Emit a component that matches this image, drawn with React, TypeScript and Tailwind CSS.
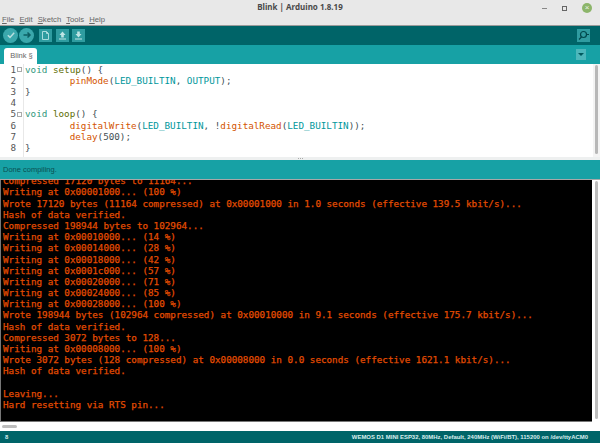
const mono = '[font-family:"DejaVu_Sans_Mono",monospace]'

const consoleLines = [
  'Compressed 17120 bytes to 11164...',
  'Writing at 0x00001000... (100 %)',
  'Wrote 17120 bytes (11164 compressed) at 0x00001000 in 1.0 seconds (effective 139.5 kbit/s)...',
  'Hash of data verified.',
  'Compressed 198944 bytes to 102964...',
  'Writing at 0x00010000... (14 %)',
  'Writing at 0x00014000... (28 %)',
  'Writing at 0x00018000... (42 %)',
  'Writing at 0x0001c000... (57 %)',
  'Writing at 0x00020000... (71 %)',
  'Writing at 0x00024000... (85 %)',
  'Writing at 0x00028000... (100 %)',
  'Wrote 198944 bytes (102964 compressed) at 0x00010000 in 9.1 seconds (effective 175.7 kbit/s)...',
  'Hash of data verified.',
  'Compressed 3072 bytes to 128...',
  'Writing at 0x00008000... (100 %)',
  'Wrote 3072 bytes (128 compressed) at 0x00008000 in 0.0 seconds (effective 1621.1 kbit/s)...',
  'Hash of data verified.',
  '',
  'Leaving...',
  'Hard resetting via RTS pin...',
]

function Kw({ children }: { children: string }) {
  return <span className="text-[#33997e]">{children}</span>
}
function Fn({ children }: { children: string }) {
  return <span className="text-[#5e6d03]">{children}</span>
}
function Call({ children }: { children: string }) {
  return <span className="text-[#d35400]">{children}</span>
}
function Led() {
  return <span className="text-[#00979c]">LED_BUILTIN</span>
}

const code = [
  <><Kw>void</Kw> <Fn>setup</Fn>() {'{'}</>,
  <>{'        '}<Call>pinMode</Call>(<Led />, <span className="text-[#00979c]">OUTPUT</span>);</>,
  <>{'}'}</>,
  <></>,
  <><Kw>void</Kw> <Fn>loop</Fn>() {'{'}</>,
  <>{'        '}<Call>digitalWrite</Call>(<Led />, !<Call>digitalRead</Call>(<Led />));</>,
  <>{'        '}<Call>delay</Call>(500);</>,
  <>{'}'}</>,
]

export default function App() {
  return (
    <div className="flex h-[443px] w-[600px] flex-col overflow-hidden bg-white [font-family:'Liberation_Sans',sans-serif]">
      {/* window title */}
      <div className="relative flex h-[15px] items-center justify-center bg-[#e8e8e8]">
        <span className="text-[8px] font-bold text-[#4a4a4a] [font-family:'Noto_Sans',sans-serif]">Blink | Arduino 1.8.19</span>
        <div className="absolute right-[8px] top-[3px] flex items-center gap-[15px]">
          <span className="h-px w-[5px] bg-[#888]" />
          <span className="h-[5px] w-[5px] border border-[#666]" />
          <span className="flex h-[10px] w-[10px] items-center justify-center rounded-full bg-[#8cb56a] text-[8px] leading-none text-[#eef3e8]">×</span>
        </div>
      </div>
      {/* menu */}
      <div className="flex h-[10px] items-center gap-[5px] bg-[#e8e8e8] pl-[2px] text-[7.7px] text-[#666]">
        <span><u>F</u>ile</span>
        <span><u>E</u>dit</span>
        <span><u>S</u>ketch</span>
        <span><u>T</u>ools</span>
        <span><u>H</u>elp</span>
      </div>
      <div className="h-px bg-[#9a9a9a]" />
      {/* toolbar */}
      <div className="flex h-[19px] items-center bg-[#006468] pl-[3px] pr-[10px]">
        <div className="flex h-[15px] w-[15px] items-center justify-center rounded-full bg-[#3aa8ac]">
          <svg viewBox="0 0 14 14" className="h-[14px] w-[14px]" fill="none" stroke="#b9dfdf" strokeWidth="1.5">
            <path d="M3.8 7.2 6 9.4 10.2 4.8" />
          </svg>
        </div>
        <div className="ml-[1px] flex h-[15px] w-[15px] items-center justify-center rounded-full bg-[#3aa8ac]">
          <svg viewBox="0 0 14 14" className="h-[14px] w-[14px]" fill="none" stroke="#0d5f63" strokeWidth="1.5">
            <path d="M3.5 7h6.5M7.5 4.5 10 7l-2.5 2.5" />
          </svg>
        </div>
        <div className="ml-[5px] flex h-[13px] w-[13px] items-center justify-center bg-[#2f9ca0]">
          <svg viewBox="0 0 13 13" className="h-[13px] w-[13px]" fill="none" stroke="#a9dcde" strokeWidth="1">
            <path d="M3.5 2.5h4l2 2v6h-6zM7.5 2.5v2h2" />
          </svg>
        </div>
        <div className="ml-[4px] flex h-[13px] w-[13px] items-center justify-center bg-[#2f9ca0]">
          <svg viewBox="0 0 13 13" className="h-[13px] w-[13px]" fill="#bfe4e5">
            <path d="M6.5 2.5 9.5 6H7.8v2.5H5.2V6H3.5zM3 9.5h7v1H3z" />
          </svg>
        </div>
        <div className="ml-[3px] flex h-[13px] w-[13px] items-center justify-center bg-[#2f9ca0]">
          <svg viewBox="0 0 13 13" className="h-[13px] w-[13px]" fill="#bfe4e5">
            <path d="M5.2 2.5h2.6V5h1.7l-3 3.5-3-3.5h1.7zM3 9.5h7v1H3z" />
          </svg>
        </div>
        <div className="ml-auto flex h-[13px] w-[13px] items-center justify-center bg-[#2f9ca0]">
          <svg viewBox="0 0 13 13" className="h-[13px] w-[13px]" fill="none" stroke="#00484c" strokeWidth="1.2">
            <circle cx="6.5" cy="5.5" r="3" />
            <path d="M4.5 8 2 10.5M9.5 5.5H12" />
          </svg>
        </div>
      </div>
      {/* tabs */}
      <div className="flex h-[19px] items-end bg-[#17a1a5] pl-[4px] pr-[14px]">
        <div className="flex h-[16px] w-[33px] items-center justify-center rounded-t-[3px] bg-white pl-[2px] text-[7.5px] text-[#666]">
          Blink §
        </div>
        <div className="mb-[4px] ml-auto flex h-[11px] w-[10px] items-center justify-center bg-[#4db7bb]">
          <span className="h-0 w-0 border-x-[3px] border-t-[3px] border-x-transparent border-t-[#00585c]" />
        </div>
      </div>
      {/* editor */}
      <div className="flex h-[94px] bg-white">
        <div className={`flex w-[24px] flex-col items-end border-r border-[#e8e8e8] pr-[1px] text-[9.27px] leading-[11.2px] text-[#555] ${mono}`}>
          {[1, 2, 3, 4, 5, 6, 7, 8].map((n) => (
            <div key={n} className="flex h-[11.2px] items-center">
              {n}
              <span className="ml-[1px] flex h-[5px] w-[5px] items-center justify-center">
                {(n === 1 || n === 5) && <span className="block h-[5px] w-[5px] border border-[#aaa]" />}
              </span>
            </div>
          ))}
        </div>
        <pre className={`flex-1 pl-px text-[9.27px] leading-[11.2px] text-[#434f54] ${mono}`}>
          {code.map((line, i) => (
            <div key={i} className="h-[11.2px]">{line}</div>
          ))}
        </pre>
        <div className="flex w-[7px] justify-center bg-[#f4f4f4] pt-[1px]">
          <div className="h-[89px] w-[3px] rounded-sm bg-[#b8b8b8]" />
        </div>
      </div>
      {/* divider */}
      <div className="flex h-[3px] items-center justify-center gap-px bg-[#eef0f0]">
        <span className="h-px w-px bg-[#aaa]" />
        <span className="h-px w-px bg-[#aaa]" />
        <span className="h-px w-px bg-[#aaa]" />
      </div>
      {/* status */}
      <div className="flex h-[19px] items-center bg-[#17a1a5] pl-[3px] text-[7.5px] text-[#0b4f52]">
        Done compiling.
      </div>
      <div className="h-px bg-[#a8a8a8]" />
      {/* console */}
      <div className="flex h-[242px] bg-white">
        <div className="flex flex-1 flex-col justify-end overflow-hidden border-b border-l border-[#777] bg-black pb-[11px] pl-[2px]">
          {consoleLines.map((line, i) => (
            <div key={i} className={`h-[11.2px] shrink-0 whitespace-pre text-[9.27px] leading-[11.2px] text-[#e34c00] [-webkit-text-stroke:0.25px_#e34c00] ${mono}`}>
              {line}
            </div>
          ))}
        </div>
        <div className="flex w-[8px] justify-center pt-[1px]">
          <div className="h-[238px] w-[3px] rounded-sm bg-[#bdbdbd]" />
        </div>
      </div>
      {/* horizontal scroll */}
      <div className="flex h-[9px] items-center bg-white pl-[2px]">
        <div className="h-[3px] w-[15px] rounded-sm bg-[#bdbdbd]" />
      </div>
      {/* board line */}
      <div className="flex h-[12px] items-center justify-between bg-[#006468] pl-[5px] pr-[12px] text-[5.95px] font-bold text-[#d8eeee]">
        <span>8</span>
        <span>WEMOS D1 MINI ESP32, 80MHz, Default, 240MHz (WiFi/BT), 115200 on /dev/ttyACM0</span>
      </div>
    </div>
  )
}
